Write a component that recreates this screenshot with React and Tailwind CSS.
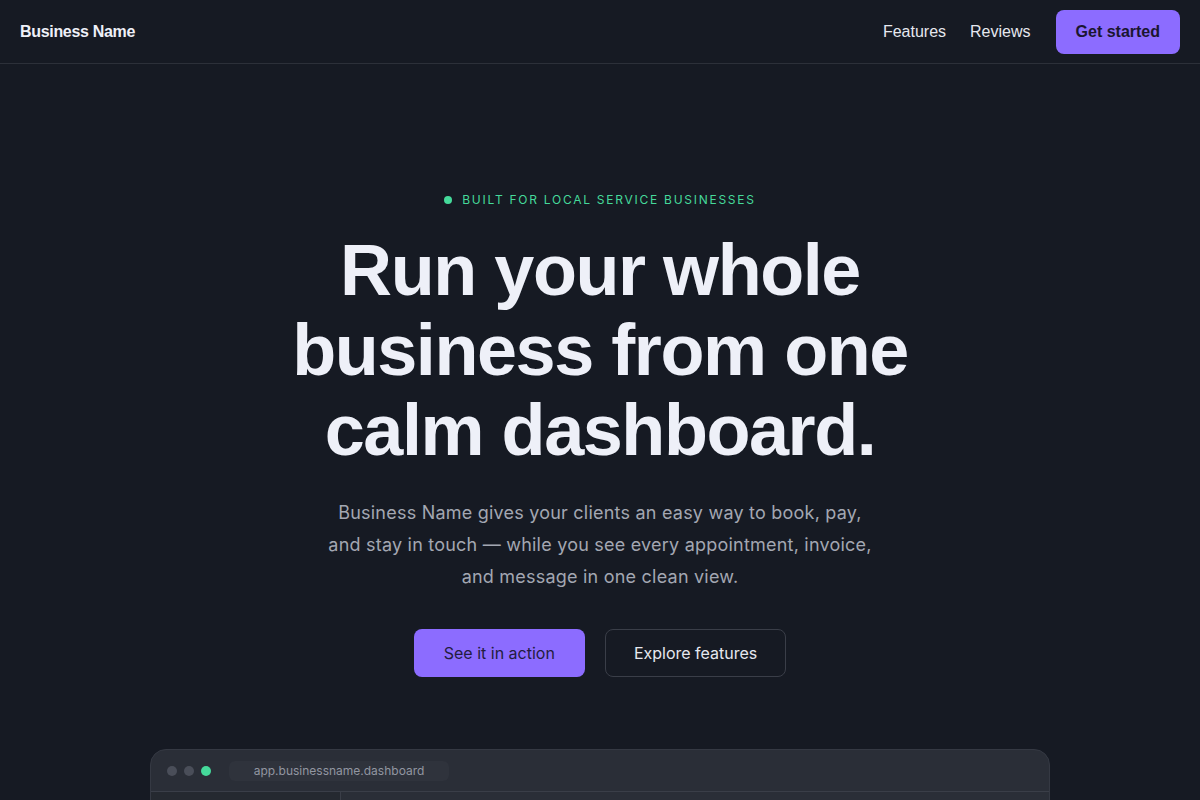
export default function App() {
  return (
    <div className="min-h-screen bg-[#161a23] overflow-hidden" style={{ fontFamily: "Inter, 'Liberation Sans', sans-serif" }}>
      <nav className="h-16 border-b border-[#2c3039] flex items-center justify-between px-5">
        <div className="text-[16px] font-bold text-[#eef0f8] tracking-[-0.02em]" style={{ fontFamily: "'Liberation Sans', Arial, sans-serif" }}>
          Business Name
        </div>
        <div className="flex items-center" style={{ fontFamily: "'Liberation Sans', Arial, sans-serif" }}>
          <a className="text-[16px] text-[#e6e8ef]">Features</a>
          <a className="text-[16px] text-[#e6e8ef] ml-6">Reviews</a>
          <button className="ml-[25px] h-11 px-5 rounded-lg bg-[#8c6cff] text-[16px] font-bold text-[#1b1630]">
            Get started
          </button>
        </div>
      </nav>
      <main className="flex flex-col items-center pt-[128px]">
        <div className="flex items-center gap-2.5 text-[12px] tracking-[0.145em] text-[#45d99a] leading-4">
          <span className="w-2 h-2 rounded-full bg-[#45d99a]"></span>
          <span>BUILT FOR LOCAL SERVICE BUSINESSES</span>
        </div>
        <h1
          className="mt-[22px] text-center text-[72px] leading-[80px] font-bold tracking-[-0.02em] text-[#eef0f8]"
          style={{ fontFamily: "'Liberation Sans', Arial, sans-serif" }}
        >
          Run your whole
          <br />
          business from one
          <br />
          calm dashboard.
        </h1>
        <p className="mt-[27px] max-w-[550px] text-center text-[18px] leading-8 tracking-[0.012em] text-[#a3a7b2]">
          Business Name gives your clients an easy way to book, pay, and stay in touch — while you see every appointment, invoice, and message in one clean view.
        </p>
        <div className="mt-[36px] flex gap-5">
          <button className="h-12 px-[30px] rounded-lg bg-[#8c6cff] text-[16px] text-[#231c40]">See it in action</button>
          <button className="h-12 px-7 rounded-lg border border-[#3a3e48] text-[16px] text-[#e6e8ef]">Explore features</button>
        </div>
        <div className="mt-[72px] w-[900px] rounded-t-2xl bg-[#2a2e37] border border-[#353943]">
          <div className="h-[42px] flex items-center px-4 border-b border-[#3a3e48]">
            <div className="flex gap-[7px]">
              <span className="w-2.5 h-2.5 rounded-full bg-[#4a4e59]"></span>
              <span className="w-2.5 h-2.5 rounded-full bg-[#4a4e59]"></span>
              <span className="w-2.5 h-2.5 rounded-full bg-[#45d99a]"></span>
            </div>
            <div className="ml-[18px] w-[220px] h-5 rounded-md bg-[#2f333c] flex items-center justify-center text-[12px] text-[#9296a1]">
              app.businessname.dashboard
            </div>
          </div>
          <div className="flex h-[300px]">
            <div className="w-[190px] bg-[#252930] border-r border-[#3a3e48]"></div>
            <div className="flex-1"></div>
          </div>
        </div>
      </main>
    </div>
  );
}
